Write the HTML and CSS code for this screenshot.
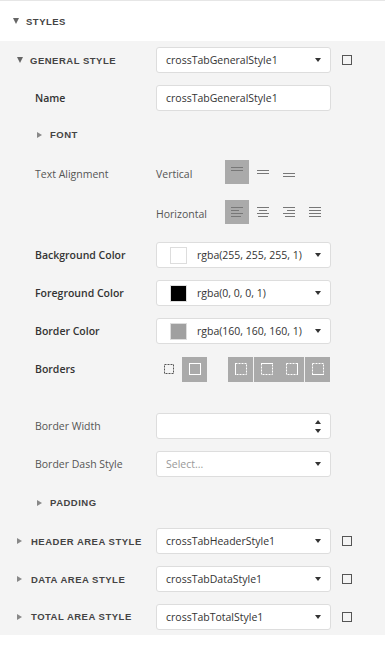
FILE: index.html
```html
<!DOCTYPE html>
<html>

<head>
    <title>Styles</title>
    <link rel="stylesheet" href="styles.css">
</head>

<body>
    <div class="panel">
        <div class="top-head">
            <span class="caret down"></span>
            <span class="head">Styles</span>
        </div>

        <div class="group">
            <div class="row section">
                <div class="label"><span class="caret down"></span><span class="head">General Style</span></div>
                <div class="box select">crossTabGeneralStyle1<span class="arrow"></span></div>
                <span class="check"></span>
            </div>

            <div class="row prop">
                <div class="label bold">Name</div>
                <div class="box">crossTabGeneralStyle1</div>
            </div>

            <div class="row sub">
                <span class="caret right"></span><span class="head">Font</span>
            </div>

            <div class="row prop align">
                <div class="label">Text Alignment</div>
                <div class="kind">Vertical</div>
                <div class="btns">
                    <div class="btn on"><svg width="12" height="12"><path d="M0 1.5h12M0 4.5h12" stroke="#777" stroke-width="1"/></svg></div>
                    <div class="btn"><svg width="12" height="12"><path d="M0 4.5h12M0 7.5h12" stroke="#777" stroke-width="1"/></svg></div>
                    <div class="btn"><svg width="12" height="12"><path d="M0 7.5h12M0 10.5h12" stroke="#777" stroke-width="1"/></svg></div>
                </div>
            </div>
            <div class="row prop align">
                <div class="label"></div>
                <div class="kind">Horizontal</div>
                <div class="btns">
                    <div class="btn on"><svg width="12" height="12"><path d="M0 1.5h12M0 4.5h8M0 7.5h12M0 10.5h10" stroke="#777" stroke-width="1"/></svg></div>
                    <div class="btn"><svg width="12" height="12"><path d="M0 1.5h12M2 4.5h8M0 7.5h12M1 10.5h10" stroke="#777" stroke-width="1"/></svg></div>
                    <div class="btn"><svg width="12" height="12"><path d="M0 1.5h12M4 4.5h8M0 7.5h12M2 10.5h10" stroke="#777" stroke-width="1"/></svg></div>
                    <div class="btn"><svg width="12" height="12"><path d="M0 1.5h12M0 4.5h12M0 7.5h12M0 10.5h12" stroke="#777" stroke-width="1"/></svg></div>
                </div>
            </div>

            <div class="gap-s"></div>

            <div class="row prop">
                <div class="label bold">Background Color</div>
                <div class="box select color"><span class="swatch" style="background:rgba(255, 255, 255, 1)"></span>rgba(255, 255, 255, 1)<span class="arrow"></span></div>
            </div>
            <div class="row prop">
                <div class="label bold">Foreground Color</div>
                <div class="box select color"><span class="swatch" style="background:rgba(0, 0, 0, 1)"></span>rgba(0, 0, 0, 1)<span class="arrow"></span></div>
            </div>
            <div class="row prop">
                <div class="label bold">Border Color</div>
                <div class="box select color"><span class="swatch" style="background:rgba(160, 160, 160, 1)"></span>rgba(160, 160, 160, 1)<span class="arrow"></span></div>
            </div>

            <div class="row prop">
                <div class="label bold">Borders</div>
                <div class="borders">
                    <div class="bbtn"><svg width="10" height="10"><rect x="0.5" y="0.5" width="9" height="9" fill="none" stroke="#555" stroke-dasharray="2 1"/></svg></div>
                    <div class="bbtn on"><svg width="12" height="12"><rect x="0.5" y="0.5" width="11" height="11" fill="none" stroke="#fff"/></svg></div>
                </div>
                <div class="bgroup">
                    <div class="bbtn on"><svg width="12" height="12"><rect x="0.5" y="0.5" width="11" height="11" fill="none" stroke="#fff" stroke-dasharray="2 1"/><path d="M0.5 0v12" stroke="#fff"/></svg></div>
                    <div class="bbtn on sep"><svg width="12" height="12"><rect x="0.5" y="0.5" width="11" height="11" fill="none" stroke="#fff" stroke-dasharray="2 1"/><path d="M0 0.5h12" stroke="#fff"/></svg></div>
                    <div class="bbtn on"><svg width="12" height="12"><rect x="0.5" y="0.5" width="11" height="11" fill="none" stroke="#fff" stroke-dasharray="2 1"/><path d="M11.5 0v12" stroke="#fff"/></svg></div>
                    <div class="bbtn on sep"><svg width="12" height="12"><rect x="0.5" y="0.5" width="11" height="11" fill="none" stroke="#fff" stroke-dasharray="2 1"/><path d="M0 11.5h12" stroke="#fff"/></svg></div>
                </div>
            </div>

            <div class="gap-l"></div>

            <div class="row prop">
                <div class="label">Border Width</div>
                <div class="box spin"><span class="up"></span><span class="dn"></span></div>
            </div>
            <div class="row prop">
                <div class="label">Border Dash Style</div>
                <div class="box select holder">Select...<span class="arrow"></span></div>
            </div>

            <div class="row sub pad">
                <span class="caret right"></span><span class="head">Padding</span>
            </div>

            <div class="row section">
                <div class="label"><span class="caret right"></span><span class="head">Header Area Style</span></div>
                <div class="box select">crossTabHeaderStyle1<span class="arrow"></span></div>
                <span class="check"></span>
            </div>
            <div class="row section">
                <div class="label"><span class="caret right"></span><span class="head">Data Area Style</span></div>
                <div class="box select">crossTabDataStyle1<span class="arrow"></span></div>
                <span class="check"></span>
            </div>
            <div class="row section last">
                <div class="label"><span class="caret right"></span><span class="head">Total Area Style</span></div>
                <div class="box select">crossTabTotalStyle1<span class="arrow"></span></div>
                <span class="check"></span>
            </div>
        </div>
    </div>
</body></html>
```

FILE: styles.css
```css
body {
    margin: 0;
    background-color: white;
    font-family: "Open Sans", "Noto Sans", sans-serif;
    font-size: 10.5px;
    color: #333;
}

.panel {
    border-top: 1px solid #e6e6e6;
}

.top-head {
    height: 40px;
    display: flex;
    align-items: center;
    padding-left: 13px;
}

.head {
    font-family: "Liberation Sans", Arial, sans-serif;
    font-weight: 700;
    font-size: 9.5px;
    letter-spacing: .5px;
    text-transform: uppercase;
    color: #444;
}

.caret {
    display: inline-block;
    width: 0;
    height: 0;
}

.caret.down {
    border-left: 3px solid transparent;
    border-right: 3px solid transparent;
    border-top: 6px solid #666;
    margin-right: 7px;
}

.caret.right {
    border-top: 3.5px solid transparent;
    border-bottom: 3.5px solid transparent;
    border-left: 5px solid #888;
    margin-right: 8px;
}

.group {
    background-color: #f4f4f4;
}

.row {
    height: 38px;
    display: flex;
    align-items: center;
}

.row .label {
    width: 121px;
    flex: none;
}

.row.section .label {
    width: 139px;
    padding-left: 17px;
    display: flex;
    align-items: center;
}

.row.section .caret.right {
    margin-right: 9px;
}

.row.section.last {
    height: 37px;
}

.row.prop {
    padding-left: 35px;
}

.label.bold {
    font-weight: 600;
}

.row.sub {
    height: 35px;
    padding-left: 37px;
}

.row.sub.pad {
    height: 39px;
}

.row.align {
    height: 40px;
}

.row.align .label,
.kind {
    padding-top: 3px;
}

.kind {
    width: 69px;
    color: #555;
}

.row .label:not(.bold) {
    color: #555;
}

.btns {
    display: flex;
    gap: 2px;
}

.btn {
    width: 24px;
    height: 24px;
    display: flex;
    align-items: center;
    justify-content: center;
}

.btn.on {
    background-color: #aaa;
}

.gap-s {
    height: 4px;
}

.gap-l {
    height: 19px;
}

.box {
    box-sizing: border-box;
    width: 175px;
    height: 26px;
    background-color: white;
    border: 1px solid #ddd;
    border-radius: 3px;
    padding-left: 9px;
    display: flex;
    align-items: center;
    position: relative;
    flex: none;
}

.box .arrow {
    position: absolute;
    right: 9px;
    top: 10px;
    border-left: 3.5px solid transparent;
    border-right: 3.5px solid transparent;
    border-top: 4px solid #333;
}

.box.color {
    padding-left: 13px;
}

.swatch {
    box-sizing: border-box;
    width: 17px;
    height: 17px;
    border: 1px solid #ddd;
    margin-right: 10px;
}

.box.holder {
    color: #999;
}

.box.spin .up,
.box.spin .dn {
    position: absolute;
    right: 9px;
    border-left: 3.5px solid transparent;
    border-right: 3.5px solid transparent;
}

.box.spin .up {
    top: 6px;
    border-bottom: 4px solid #333;
}

.box.spin .dn {
    top: 15px;
    border-top: 4px solid #333;
}

.check {
    box-sizing: border-box;
    width: 10px;
    height: 10px;
    border: 1px solid #555;
    margin-left: 11px;
}

.borders {
    display: flex;
    gap: 1px;
    width: 72px;
}

.bbtn {
    width: 25px;
    height: 25px;
    display: flex;
    align-items: center;
    justify-content: center;
}

.bbtn.on {
    background-color: #aaa;
}

.bgroup {
    display: flex;
}

.bgroup .sep {
    border-left: 1px solid #f0f0f0;
}
```
